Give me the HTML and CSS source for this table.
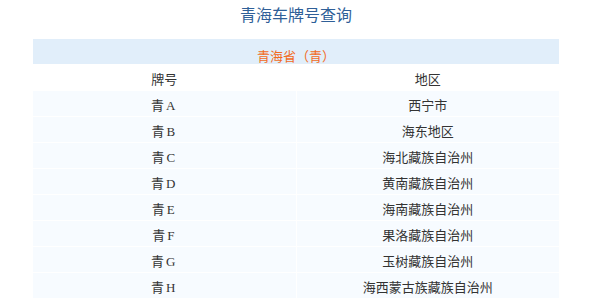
FILE: index.html
```html
<!DOCTYPE html>
<html lang="zh-CN">
<head>
<meta charset="utf-8">
<title>青海车牌号查询</title>
<link rel="stylesheet" href="styles.css">
</head>
<body>
<div class="page">
  <h1 class="title">青海车牌号查询</h1>
  <table class="plates">
    <thead>
      <tr><th class="province" colspan="2">青海省（青）</th></tr>
      <tr class="head"><th>牌号</th><th>地区</th></tr>
    </thead>
    <tbody>
      <tr><td>青A</td><td>西宁市</td></tr>
      <tr><td>青B</td><td>海东地区</td></tr>
      <tr><td>青C</td><td>海北藏族自治州</td></tr>
      <tr><td>青D</td><td>黄南藏族自治州</td></tr>
      <tr><td>青E</td><td>海南藏族自治州</td></tr>
      <tr><td>青F</td><td>果洛藏族自治州</td></tr>
      <tr><td>青G</td><td>玉树藏族自治州</td></tr>
      <tr><td>青H</td><td>海西蒙古族藏族自治州</td></tr>
    </tbody>
  </table>
</div>
</body>
</html>
```
FILE: styles.css
```css
html, body {
  margin: 0;
  padding: 0;
  background: #ffffff;
}
.page {
  width: 528px;
  margin-left: 32px;
  font-family: "Liberation Serif", "Noto Sans CJK SC", serif;
  color: #333333;
}
.title {
  margin: 0;
  padding-top: 3px;
  height: 35px;
  font-family: "Noto Sans CJK SC", sans-serif;
  font-size: 16px;
  font-weight: normal;
  line-height: 22px;
  color: #2f5f98;
  text-align: center;
}
.plates {
  width: 528px;
  border-collapse: separate;
  border-spacing: 1px;
  font-size: 13px;
  table-layout: fixed;
}
.plates th,
.plates td {
  padding: 4px 0 0;
  line-height: 21px;
  height: 21px;
  text-align: center;
  font-weight: normal;
}
.plates .province {
  background: #e1eefa;
  color: #f26b1d;
  font-family: "Noto Sans CJK SC", sans-serif;
  padding-top: 9px;
  line-height: 16px;
  height: 16px;
}
.plates .head th {
  background: #ffffff;
  color: #333333;
}
.plates td {
  background: #f7fbff;
}
.plates td:first-child {
  letter-spacing: 2px;
}
```
